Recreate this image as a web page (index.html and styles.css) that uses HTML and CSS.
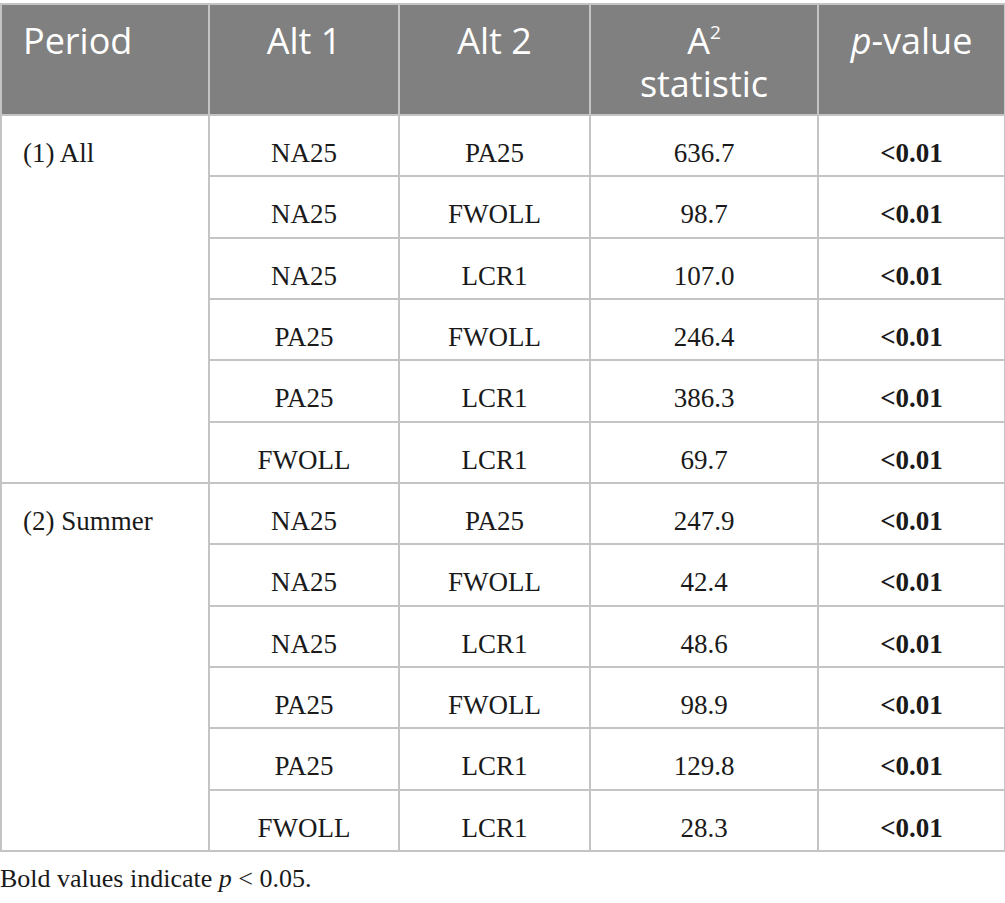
FILE: index.html
```html
<!DOCTYPE html>
<html lang="en">
<head>
    <meta charset="UTF-8">
    <meta name="viewport" content="width=device-width, initial-scale=1.0">
    <title>Anderson-Darling test results</title>
    <link rel="stylesheet" href="styles.css">
</head>
<body>
    <table class="results">
        <colgroup>
            <col class="col-period">
            <col class="col-alt">
            <col class="col-alt2">
            <col class="col-stat">
            <col class="col-p">
        </colgroup>
        <thead>
            <tr>
                <th class="left">Period</th>
                <th>Alt 1</th>
                <th>Alt 2</th>
                <th>A<sup>2</sup><br>statistic</th>
                <th><i>p</i>-value</th>
            </tr>
        </thead>
        <tbody>
            <tr>
                <td class="period" rowspan="6">(1) All</td>
                <td>NA25</td><td>PA25</td><td>636.7</td><td class="sig">&lt;0.01</td>
            </tr>
            <tr><td>NA25</td><td>FWOLL</td><td>98.7</td><td class="sig">&lt;0.01</td></tr>
            <tr><td>NA25</td><td>LCR1</td><td>107.0</td><td class="sig">&lt;0.01</td></tr>
            <tr><td>PA25</td><td>FWOLL</td><td>246.4</td><td class="sig">&lt;0.01</td></tr>
            <tr><td>PA25</td><td>LCR1</td><td>386.3</td><td class="sig">&lt;0.01</td></tr>
            <tr><td>FWOLL</td><td>LCR1</td><td>69.7</td><td class="sig">&lt;0.01</td></tr>
            <tr>
                <td class="period" rowspan="6">(2) Summer</td>
                <td>NA25</td><td>PA25</td><td>247.9</td><td class="sig">&lt;0.01</td>
            </tr>
            <tr><td>NA25</td><td>FWOLL</td><td>42.4</td><td class="sig">&lt;0.01</td></tr>
            <tr><td>NA25</td><td>LCR1</td><td>48.6</td><td class="sig">&lt;0.01</td></tr>
            <tr><td>PA25</td><td>FWOLL</td><td>98.9</td><td class="sig">&lt;0.01</td></tr>
            <tr><td>PA25</td><td>LCR1</td><td>129.8</td><td class="sig">&lt;0.01</td></tr>
            <tr><td>FWOLL</td><td>LCR1</td><td>28.3</td><td class="sig">&lt;0.01</td></tr>
        </tbody>
    </table>
    <p class="note">Bold values indicate <i>p</i> &lt; 0.05.</p>
</body>
</html>
```

FILE: styles.css
```css
body {
    margin: 0;
    padding-top: 3px;
    background: #fff;
    font-family: "Liberation Serif", "Times New Roman", serif;
    color: #1a1a1a;
}
.results {
    border-collapse: collapse;
    table-layout: fixed;
    width: 1004px;
}
.col-period { width: 208px; }
.col-alt { width: 190px; }
.col-alt2 { width: 191px; }
.col-stat { width: 228px; }
.col-p { width: 187px; }
.results th, .results td {
    border: 2px solid #c4c4c4;
    box-sizing: border-box;
}
.results th {
    height: 111px;
    padding: 14px 10px 0;
    background-color: #808080;
    color: #fff;
    font-family: "Open Sans", sans-serif;
    font-weight: 400;
    font-size: 36px;
    line-height: 43px;
    text-align: center;
    vertical-align: top;
}
.results th.left {
    text-align: left;
    padding-left: 21px;
}
.results th sup {
    font-size: 19px;
    line-height: 0;
    vertical-align: 15px;
}
.results td {
    height: 61.33px;
    padding: 22px 10px 0;
    font-size: 27px;
    line-height: 30px;
    text-align: center;
    vertical-align: top;
}
.results td.period {
    text-align: left;
    padding-left: 21px;
}
.results td.sig {
    font-weight: bold;
}
.note {
    margin: 12px 0 0;
    font-size: 26px;
    line-height: 30px;
}
```
